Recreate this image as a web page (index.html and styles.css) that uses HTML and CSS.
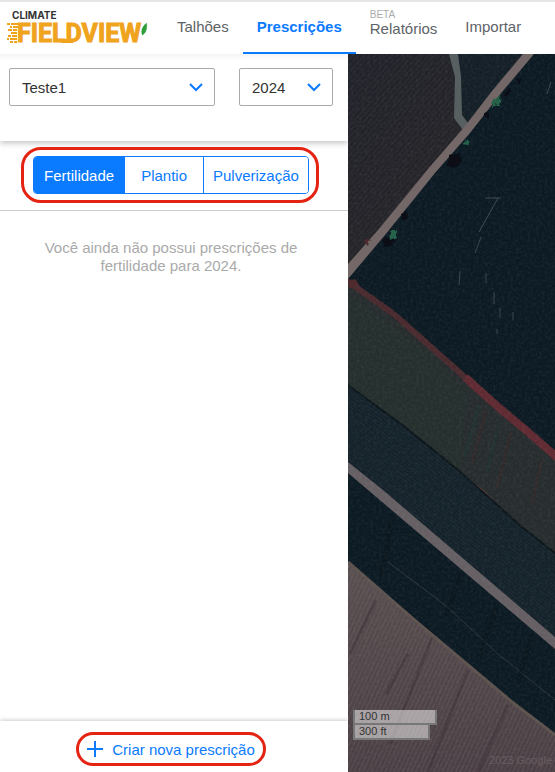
FILE: index.html
```html
<!DOCTYPE html>
<html lang="pt-BR">
<head>
  <meta charset="UTF-8">
  <meta name="viewport" content="width=device-width, initial-scale=1.0">
  <title>Climate FieldView</title>
  <link rel="stylesheet" href="styles.css">
</head>
<body>
  <header class="topbar">
    <a class="logo" href="#">
      <svg width="150" height="42" viewBox="0 0 150 42">
        <text class="logo-small" x="5" y="10">CLIMATE</text>
        <g stroke="#f0a31c" stroke-width="2">
          <path d="M0 15h3M4 15h7M3 18h2M6 18h5M1 21h4M6 21h4M4 24h6M1 27h3M5 27h5M0 30h2M3 30h7M3 33h3M7 33h3"/>
        </g>
        <text class="logo-big" x="10" y="33">FIELDVIEW</text>
        <path d="M54 32h12" stroke="#f0a31c" stroke-width="4"/>
        <path d="M140 13c1 7 0 11-5 14-3-6 1-11 5-14z" fill="#2f9e3a" stroke="#fff" stroke-width="1"/>
      </svg>
    </a>
    <nav class="nav">
      <a class="nav-item" href="#">Talhões</a>
      <a class="nav-item active" href="#">Prescrições</a>
      <a class="nav-item stacked" href="#"><span class="beta">BETA</span>Relatórios</a>
      <a class="nav-item" href="#">Importar</a>
    </nav>
  </header>

  <main class="content">
    <section class="panel">
      <div class="filters">
        <div class="select-box farm">
          <select aria-label="Fazenda">
            <option>Teste1</option>
          </select>
          <svg class="chevron" width="14" height="9" viewBox="0 0 14 9"><path d="M1 1l6 6 6-6"/></svg>
        </div>
        <div class="select-box year">
          <select aria-label="Safra">
            <option>2024</option>
          </select>
          <svg class="chevron" width="14" height="9" viewBox="0 0 14 9"><path d="M1 1l6 6 6-6"/></svg>
        </div>
      </div>

      <div class="types">
        <div class="highlight">
          <div class="segmented">
            <button class="segment selected" type="button">Fertilidade</button>
            <button class="segment" type="button">Plantio</button>
            <button class="segment" type="button">Pulverização</button>
          </div>
        </div>
      </div>

      <p class="empty">Você ainda não possui prescrições de fertilidade para 2024.</p>

      <div class="panel-footer">
        <button class="create" type="button">
          <svg width="16" height="16" viewBox="0 0 16 16"><path d="M8 0v16M0 8h16"/></svg>
          Criar nova prescrição
        </button>
      </div>
    </section>

    <section class="map">
      <svg class="satellite" viewBox="0 0 207 718" preserveAspectRatio="xMinYMin slice">
        <defs>
          <pattern id="rows-brown" width="4" height="8" patternUnits="userSpaceOnUse" patternTransform="rotate(25)">
            <path d="M1 0v8" stroke="#75656a" stroke-width="1" opacity=".4"/>
          </pattern>
          <pattern id="rows-dark" width="5" height="3" patternUnits="userSpaceOnUse" patternTransform="rotate(38)">
            <path d="M0 1h5" stroke="#2c3a42" stroke-width="1" opacity=".35"/>
          </pattern>
          <pattern id="rows-left" width="5" height="4" patternUnits="userSpaceOnUse" patternTransform="rotate(-48)">
            <path d="M0 1h5" stroke="#3a3337" stroke-width="1" opacity=".4"/>
          </pattern>
          <linearGradient id="left-field" x1="0" y1="0" x2="1" y2="1">
            <stop offset="0" stop-color="#1f2129"/>
            <stop offset="1" stop-color="#272527"/>
          </linearGradient>
          <linearGradient id="brown-field" x1="0" y1="0" x2="0" y2="1">
            <stop offset="0" stop-color="#574d4e"/>
            <stop offset="1" stop-color="#483d42"/>
          </linearGradient>
          <filter id="grain" x="0" y="0" width="100%" height="100%">
            <feTurbulence type="fractalNoise" baseFrequency=".35" numOctaves="3" seed="4"/>
            <feColorMatrix values="0 0 0 0 .6  0 0 0 0 .6  0 0 0 0 .6  0 0 0 1.2 -.45"/>
          </filter>
          <filter id="rough" x="-10%" y="-10%" width="120%" height="120%">
            <feTurbulence type="fractalNoise" baseFrequency=".2" numOctaves="2" seed="2"/>
            <feDisplacementMap in="SourceGraphic" scale="6"/>
          </filter>
        </defs>

        <rect width="207" height="718" fill="#0c1a23"/>

        <!-- field left of the dirt road -->
        <path d="M0 0h176L0 213z" fill="url(#left-field)"/>
        <path d="M0 0h176L0 213z" fill="url(#rows-left)"/>
        <path d="M106 0h68l-54 68-8-8z" fill="#141f27"/>

        <!-- light scratches on the big field -->
        <g stroke="#46545b" stroke-width="1" fill="none" opacity=".8">
          <path d="M150 144l-19 34M133 183l-6 16M112 217l-1 14M138 219v10M146 238v12M152 254v10M165 258v8M149 275v5M203 28l-4 12M137 144h16"/>
        </g>

        <!-- green field and its red hedge -->
        <path d="M0 229L84 294l66 59 57 48v98l-33-26-64-57-53-43L0 331z" fill="#272d2e"/>
        <path d="M0 240l84 62 36 40-10 74-53-43L0 331z" fill="#25312e" opacity=".7"/>
        <g stroke="#203634" stroke-width="3" fill="none" opacity=".6">
          <path d="M131 352l-14 50M150 372l-11 45"/>
        </g>
        <g stroke="#38282c" stroke-width="3" fill="none" opacity=".6">
          <path d="M138 357l-14 52M163 378l-14 57M194 405l-10 45"/>
        </g>
        <g filter="url(#rough)" fill="none">
          <path d="M-2 226l49 35 37 33 36 32" stroke="#4a292f" stroke-width="6"/>
          <path d="M118 324l32 29 30 25 32 28" stroke="#602a32" stroke-width="8"/>
          <path d="M110 418l24 18 12 12M170 470l10 8" stroke="#5c3632" stroke-width="2"/>
        </g>

        <!-- planted strips around the lower road -->
        <path d="M0 331l57 42 53 43 64 57 33 26v84L35 436 0 408z" fill="#121f28"/>
        <path d="M0 331l57 42 53 43 64 57 33 26v84L35 436 0 408z" fill="url(#rows-dark)"/>
        <path d="M0 331l57 42 53 43 64 57 33 26" fill="none" stroke="#0d171c" stroke-width="2"/>
        <path d="M40 508l57 43 53 49 57 46" fill="none" stroke="#2c343a" stroke-width="1"/>
        <path d="M45 460l-12 62M112 520l-14 42M148 552l-16 50M184 580l-14 50" fill="none" stroke="#09141a" stroke-width="4" opacity=".5"/>
        <path d="M0 408l35 28 172 147v12L20 436 0 419z" fill="#655f63"/>

        <!-- brown ploughed field -->
        <path d="M0 508l64 56 56 47 44 37 43 33v37H0z" fill="url(#brown-field)"/>
        <path d="M0 508l64 56 56 47 44 37 43 33v37H0z" fill="url(#rows-brown)"/>
        <path d="M0 508l64 56 56 47 44 37 43 33" fill="none" stroke="#5c524e" stroke-width="3"/>
        <g stroke="#3b3036" stroke-width="3" fill="none" opacity=".5">
          <path d="M28 546L2 600M84 584L42 690M120 616L80 718M160 651l-30 67M60 600L38 640"/>
        </g>

        <rect width="207" height="718" filter="url(#grain)" opacity=".12"/>

        <!-- roads -->
        <path d="M101 0h9l3 23 1 38 6 8-5 7-9-12 1-41z" fill="#585f61"/>
        <path d="M175 0h11l-32 38-32 41-35 40-50 62L0 225v-15l30-34 50-61 37-43 27-35z" fill="#746767"/>

        <!-- trees -->
        <g filter="url(#rough)">
          <path d="M102 102l10-3 2 8-8 7-8-2zM36 184l11-1-3 8-9 3zM155 37l8-3-1 8-6 1zM53 160l6-2 1 6-6 3zM168 24l6 1-2 7zM136 61l5-3-1 7z" fill="#080c19"/>
          <path d="M144 47l9-5-2 9-8 2zM41 180l7-5v8l-6 3zM115 91l5-6 1 7z" fill="#28644b"/>
          <path d="M16 188l6-3-2 7zM0 225l8 1 4 6-12 1z" fill="#4f2a2d"/>
        </g>
      </svg>
      <div class="scale">
        <span class="scale-line metric">100 m</span>
        <span class="scale-line imperial">300 ft</span>
      </div>
      <span class="credit">2023 Google</span>
    </section>
  </main>
</body>
</html>
```

FILE: styles.css
```css
* {
  box-sizing: border-box;
}

body {
  margin: 0;
  min-height: 100vh;
  display: flex;
  flex-direction: column;
  font-family: "Liberation Sans", Arial, sans-serif;
  font-size: 15px;
  color: #333;
  background-color: #fff;
}

button,
select {
  font: inherit;
}

/* top bar */
.topbar {
  display: flex;
  height: 54px;
  border-top: 2px solid #e6e6e6;
  background-color: #fff;
  position: relative;
  z-index: 2;
}

.logo {
  width: 163px;
  padding: 7px 0 0 7px;
  flex: none;
}

.logo svg {
  display: block;
}

.logo-small {
  font: bold 10px Inter, sans-serif;
  fill: #333;
}

.logo-big {
  font: bold 25px Roboto, sans-serif;
  fill: #f0a31c;
  stroke: #f0a31c;
  stroke-width: 1px;
}

.nav {
  display: flex;
}

.nav-item {
  display: flex;
  align-items: center;
  padding: 0 14px;
  line-height: 16px;
  color: #5d6266;
  text-decoration: none;
  border-bottom: 2px solid transparent;
}

.nav-item.active {
  color: #0a7aff;
  font-weight: bold;
  border-bottom-color: #0a7aff;
}

.nav-item.stacked {
  flex-direction: column;
  align-items: flex-start;
  justify-content: center;
  padding-bottom: 8px;
}

.beta {
  font-size: 10px;
  line-height: 12px;
  color: #aaa;
}

/* page */
.content {
  flex: 1;
  display: grid;
  grid-template-columns: 348px 1fr;
}

.panel {
  display: flex;
  flex-direction: column;
}

.filters {
  display: flex;
  gap: 24px;
  padding: 14px 15px 35px 9px;
  box-shadow: 0 2px 6px rgba(0, 0, 0, 0.25), inset 0 6px 6px -4px rgba(0, 0, 0, 0.06);
}

.select-box {
  position: relative;
}

.farm {
  flex: 1;
}

.year {
  width: 94px;
}

.select-box select {
  display: block;
  width: 100%;
  height: 38px;
  padding: 0 12px;
  appearance: none;
  border: 1px solid #aaa;
  border-radius: 2px;
  background-color: #fff;
  color: #333;
}

.chevron {
  position: absolute;
  top: 15px;
  right: 12px;
  fill: none;
  stroke: #0a7aff;
  stroke-width: 2;
  pointer-events: none;
}

.types {
  display: flex;
  justify-content: center;
  padding: 6px 8px 7px 0;
  border-bottom: 1px solid #ccc;
}

.highlight {
  padding: 6px 7px 6px 9px;
  border: 3px solid #e42313;
  border-radius: 20px;
  background-color: #fff;
}

.segmented {
  display: flex;
  border: 1px solid #0a7aff;
  border-radius: 4px;
  overflow: hidden;
}

.segment {
  height: 36px;
  padding: 0 9px;
  border: none;
  background-color: #fff;
  color: #0a7aff;
  cursor: pointer;
}

.segment:nth-child(2) {
  padding: 0 16px;
}

.segment + .segment {
  border-left: 1px solid #0a7aff;
}

.segment.selected {
  padding: 0 10px;
  background-color: #0a7aff;
  color: #fff;
}

.empty {
  flex: 1;
  margin: 0;
  padding: 28px 40px 0 34px;
  line-height: 18px;
  text-align: center;
  color: #aaa;
}

.panel-footer {
  display: flex;
  justify-content: center;
  padding: 11px 6px 6px 0;
  box-shadow: 0 -1px 4px rgba(0, 0, 0, 0.2);
}

.create {
  display: flex;
  align-items: center;
  gap: 9px;
  height: 34px;
  padding: 0 8px;
  border: 3px solid #e42313;
  border-radius: 17px;
  background-color: #fff;
  color: #0a7aff;
  cursor: pointer;
}

.create svg {
  fill: none;
  stroke: #0a7aff;
  stroke-width: 2;
}

/* map */
.map {
  position: relative;
  overflow: hidden;
  background-color: #0c1a23;
}

.satellite {
  position: absolute;
  width: 100%;
  height: 100%;
}

.scale {
  position: absolute;
  left: 5px;
  bottom: 32px;
  font-size: 11px;
  line-height: 13px;
}

.scale-line {
  display: block;
  padding: 0 4px;
  border: 2px solid #777;
  border-top: none;
  background-color: rgba(255, 255, 255, 0.5);
}

.metric {
  width: 84px;
}

.imperial {
  width: 77px;
}

.credit {
  position: absolute;
  right: 3px;
  bottom: 6px;
  font-size: 11px;
  white-space: nowrap;
  color: #6a5d62;
}
```
